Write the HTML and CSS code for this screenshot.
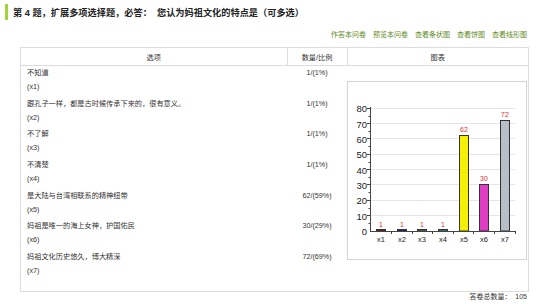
FILE: index.html
```html
<html>
	<head>
		<meta charset="utf-8">
		<link rel="stylesheet" href="styles.css">
	</head>
	<body>
		<div class="q-title"><span class="mark"></span>第 4 题，扩展多项选择题，必答：&nbsp; 您认为妈祖文化的特点是（可多选）</div>
		<div class="links">
			<a>作答本问卷</a><a>预览本问卷</a><a>查看条状图</a><a>查看饼图</a><a>查看线形图</a>
		</div>

		<table class="stat">
			<tr class="head">
				<th class="c-opt">选项</th>
				<th class="c-num">数量/比例</th>
				<th class="c-chart">图表</th>
			</tr>
			<tr>
				<td class="opt"><div>不知道</div><div>(x1)</div></td>
				<td class="num">1/(1%)</td>
				<td class="chart" rowspan="7">
					<div class="chart-box">
						<svg width="178" height="177" viewBox="0 0 178 177">
							<g stroke="#e6e6e6" stroke-width="1">
								<line x1="23" y1="133.5" x2="167" y2="133.5"/>
								<line x1="23" y1="118.5" x2="167" y2="118.5"/>
								<line x1="23" y1="102.5" x2="167" y2="102.5"/>
								<line x1="23" y1="87.5" x2="167" y2="87.5"/>
								<line x1="23" y1="72.5" x2="167" y2="72.5"/>
								<line x1="23" y1="56.5" x2="167" y2="56.5"/>
								<line x1="23" y1="41.5" x2="167" y2="41.5"/>
								<line x1="23" y1="26.5" x2="167" y2="26.5"/>
							</g>
							<g stroke="#333" stroke-width="1">
								<rect x="28.5" y="147.5" width="9" height="1.5" fill="#8b1010"/>
								<rect x="49.5" y="147.5" width="9" height="1.5" fill="#1a1a80"/>
								<rect x="69.5" y="147.5" width="9" height="1.5" fill="#3d8a4a"/>
								<rect x="90.5" y="147.5" width="9" height="1.5" fill="#3aa0a0"/>
								<rect x="111.5" y="53.5" width="9" height="95.5" fill="#f5f000"/>
								<rect x="131.5" y="102.5" width="9" height="46.5" fill="#e03cc4"/>
								<rect x="152.5" y="38.5" width="9" height="110.5" fill="#b8bdca"/>
							</g>
							<g stroke="#444" stroke-width="1">
								<line x1="22.5" y1="25" x2="22.5" y2="149"/>
								<line x1="22" y1="149.5" x2="168" y2="149.5"/>
								<line x1="19" y1="133.5" x2="22" y2="133.5"/>
								<line x1="19" y1="118.5" x2="22" y2="118.5"/>
								<line x1="19" y1="102.5" x2="22" y2="102.5"/>
								<line x1="19" y1="87.5" x2="22" y2="87.5"/>
								<line x1="19" y1="72.5" x2="22" y2="72.5"/>
								<line x1="19" y1="56.5" x2="22" y2="56.5"/>
								<line x1="19" y1="41.5" x2="22" y2="41.5"/>
								<line x1="19" y1="26.5" x2="22" y2="26.5"/>
								<line x1="20.5" y1="141.5" x2="22" y2="141.5"/>
								<line x1="20.5" y1="126.5" x2="22" y2="126.5"/>
								<line x1="20.5" y1="110.5" x2="22" y2="110.5"/>
								<line x1="20.5" y1="95.5" x2="22" y2="95.5"/>
								<line x1="20.5" y1="80.5" x2="22" y2="80.5"/>
								<line x1="20.5" y1="64.5" x2="22" y2="64.5"/>
								<line x1="20.5" y1="49.5" x2="22" y2="49.5"/>
								<line x1="20.5" y1="34.5" x2="22" y2="34.5"/>
								<line x1="43.5" y1="150" x2="43.5" y2="152"/>
								<line x1="64.5" y1="150" x2="64.5" y2="152"/>
								<line x1="84.5" y1="150" x2="84.5" y2="152"/>
								<line x1="105.5" y1="150" x2="105.5" y2="152"/>
								<line x1="125.5" y1="150" x2="125.5" y2="152"/>
								<line x1="146.5" y1="150" x2="146.5" y2="152"/>
								<line x1="167.5" y1="150" x2="167.5" y2="152"/>
							</g>
							<g class="ylab" text-anchor="end">
								<text x="19" y="152.5">0</text>
								<text x="19" y="137.5">10</text>
								<text x="19" y="121.5">20</text>
								<text x="19" y="106.5">30</text>
								<text x="19" y="91.5">40</text>
								<text x="19" y="75.5">50</text>
								<text x="19" y="60.5">60</text>
								<text x="19" y="45.5">70</text>
								<text x="19" y="29.5">80</text>
							</g>
							<g class="xlab" text-anchor="middle">
								<text x="33" y="160">x1</text>
								<text x="54" y="160">x2</text>
								<text x="74" y="160">x3</text>
								<text x="95" y="160">x4</text>
								<text x="116" y="160">x5</text>
								<text x="136" y="160">x6</text>
								<text x="157" y="160">x7</text>
							</g>
							<g class="vlab" text-anchor="middle">
								<text x="33" y="145">1</text>
								<text x="54" y="145">1</text>
								<text x="74" y="145">1</text>
								<text x="95" y="145">1</text>
								<text x="116" y="50">62</text>
								<text x="136" y="99">30</text>
								<text x="157" y="35">72</text>
							</g>
						</svg>
					</div>
				</td>
			</tr>
			<tr>
				<td class="opt"><div>跟孔子一样，都是古时候传承下来的，很有意义。</div><div>(x2)</div></td>
				<td class="num">1/(1%)</td>
			</tr>
			<tr>
				<td class="opt"><div>不了解</div><div>(x3)</div></td>
				<td class="num">1/(1%)</td>
			</tr>
			<tr>
				<td class="opt"><div>不清楚</div><div>(x4)</div></td>
				<td class="num">1/(1%)</td>
			</tr>
			<tr>
				<td class="opt"><div>是大陆与台湾相联系的精神纽带</div><div>(x5)</div></td>
				<td class="num">62/(59%)</td>
			</tr>
			<tr>
				<td class="opt"><div>妈祖是唯一的海上女神，护国佑民</div><div>(x6)</div></td>
				<td class="num">30/(29%)</td>
			</tr>
			<tr class="last">
				<td class="opt"><div>妈祖文化历史悠久，博大精深</div><div>(x7)</div></td>
				<td class="num">72/(69%)</td>
			</tr>
		</table>

		<div class="total">答卷总数量：&nbsp; 105</div>
	</body>
</html>
```

FILE: styles.css
```css
body {
	margin: 0;
	background: #fff;
	color: #333;
	font-family: "Liberation Sans", "Noto Sans CJK SC", sans-serif;
}

.q-title {
	display: flex;
	align-items: center;
	margin: 4px 0 0 5px;
	height: 16px;
	font-size: 9.2px;
	font-weight: bold;
	color: #222;
}

.q-title .mark {
	width: 3px;
	height: 16px;
	margin-right: 5px;
	background: #a3d33a;
}

.links {
	display: flex;
	justify-content: flex-end;
	gap: 7px;
	margin-top: 10px;
	padding-right: 13px;
	height: 10px;
	line-height: 10px;
	font-size: 7px;
}

.links a {
	color: #5e8a1c;
}

.stat {
	margin: 7px 0 0 20px;
	width: 509px;
	border-collapse: collapse;
	border: 1px solid #dcdcdc;
	font-size: 7.2px;
	color: #333;
}

.stat th {
	height: 18px;
	padding: 0;
	font-weight: normal;
	border: 1px solid #dcdcdc;
}

.c-opt {
	width: 266px;
}

.c-num {
	width: 59px;
}

.stat td {
	padding: 0;
	vertical-align: top;
}

.opt {
	padding: 0 6px 2.7px 6px !important;
	line-height: 14px;
}

.num {
	text-align: center;
	line-height: 14px;
}

.last .opt {
	padding-bottom: 13px !important;
}

.chart {
	padding: 15px 1px 0 0 !important;
}

.chart-box {
	width: 178px;
	height: 177px;
	border: 1px solid #d4d4d4;
	box-shadow: 0 0 1px #eee;
}

.chart-box svg {
	display: block;
	font-family: "Liberation Sans", sans-serif;
}

.ylab text {
	font-size: 9.5px;
	fill: #222;
}

.xlab text {
	font-size: 7.5px;
	fill: #222;
}

.vlab text {
	font-size: 7px;
	fill: #e03030;
}

.total {
	padding-right: 13px;
	text-align: right;
	height: 9px;
	line-height: 9px;
	font-size: 7px;
}
```
